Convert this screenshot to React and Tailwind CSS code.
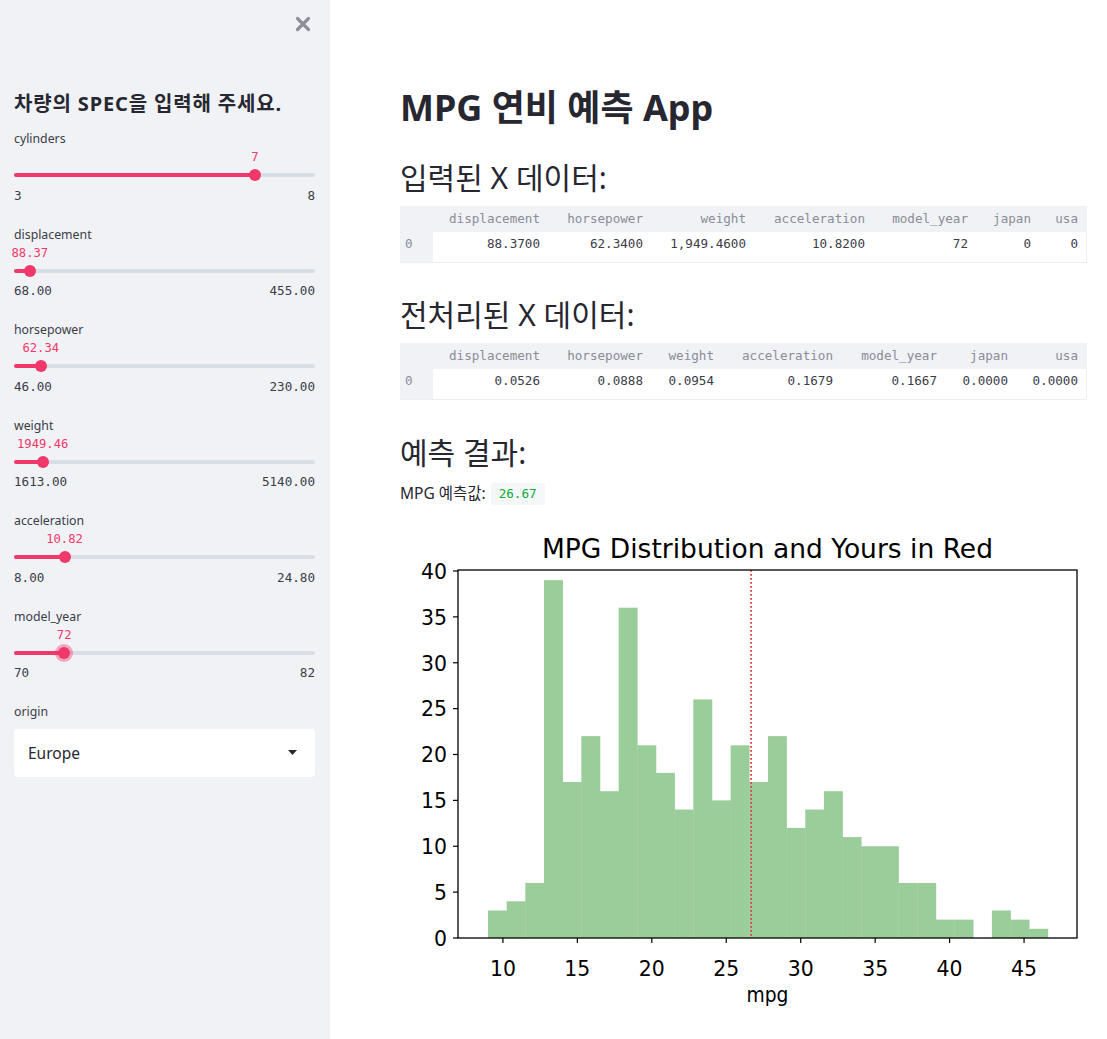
import React from "react";

const SANS = "font-['Noto_Sans','Noto_Sans_CJK_KR',sans-serif]";

const sliders = [
  { label: "cylinders", value: "7", min: "3", max: "8", frac: 0.8 },
  { label: "displacement", value: "88.37", min: "68.00", max: "455.00", frac: (88.37 - 68) / (455 - 68) },
  { label: "horsepower", value: "62.34", min: "46.00", max: "230.00", frac: (62.34 - 46) / 184 },
  { label: "weight", value: "1949.46", min: "1613.00", max: "5140.00", frac: (1949.46 - 1613) / 3527 },
  { label: "acceleration", value: "10.82", min: "8.00", max: "24.80", frac: (10.82 - 8) / 16.8 },
  { label: "model_year", value: "72", min: "70", max: "82", frac: 2 / 12, focus: true },
];

function Slider({ s }) {
  const pct = `${s.frac * 100}%`;
  return (
    <div className="mb-[17.5px]">
      <div className="h-[18px] text-[12.3px] leading-[18px] text-[#3b3d48]">{s.label}</div>
      <div className="relative h-[18px]">
        <span
          className="absolute top-0 -translate-x-1/2 font-['DejaVu_Sans_Mono',monospace] text-[12.2px] leading-[18px] text-[#f0386b] whitespace-nowrap"
          style={{ left: pct }}
        >
          {s.value}
        </span>
      </div>
      <div className="relative flex h-[18px] items-center">
        <div className="relative h-[4px] w-full rounded-full bg-[#d9dde6]">
          <div className="absolute left-0 top-0 h-[4px] rounded-full bg-[#f0386b]" style={{ width: pct }} />
        </div>
        <div
          className={
            "absolute top-1/2 h-[12px] w-[12px] -translate-x-1/2 -translate-y-1/2 rounded-full bg-[#f0386b] " +
            (s.focus ? "ring-[3px] ring-[#f0386b]/40" : "")
          }
          style={{ left: pct }}
        />
      </div>
      <div className="flex h-[24px] items-center justify-between font-['DejaVu_Sans_Mono',monospace] text-[12.6px] text-[#3b3d48]">
        <span>{s.min}</span>
        <span>{s.max}</span>
      </div>
    </div>
  );
}

function Sidebar() {
  return (
    <aside className="w-[330px] shrink-0 bg-[#f0f2f6] pl-[14px] pr-[15px]">
      <div className="flex h-[32px] items-end justify-end pr-[4px]">
        <svg width="16" height="16" viewBox="0 0 16 16">
          <path d="M2.5 2.5 L13.5 13.5 M13.5 2.5 L2.5 13.5" stroke="#8d8f98" strokeWidth="3.2" strokeLinecap="round" />
        </svg>
      </div>
      <h2 className="mt-[60px] h-[24px] whitespace-nowrap text-[20px] font-bold leading-[24px] tracking-[0.85px] text-[#262730]">
        차량의 SPEC을 입력해 주세요.
      </h2>
      <div className="mt-[14px]">
        {sliders.map((s) => (
          <Slider key={s.label} s={s} />
        ))}
      </div>
      <div className="-mt-[0.5px] h-[18px] text-[12.3px] leading-[18px] text-[#3b3d48]">origin</div>
      <div className="mt-[8px] flex h-[48px] items-center justify-between rounded-[4px] bg-white pl-[14px] pr-[18px]">
        <span className="pt-[2px] text-[15.5px] text-[#262730]">Europe</span>
        <svg width="9" height="5" viewBox="0 0 9 5">
          <path d="M0 0 L9 0 L4.5 5 Z" fill="#262730" />
        </svg>
      </div>
    </aside>
  );
}

function DataTable({ cols, headers, values }) {
  const tmpl = { gridTemplateColumns: cols.map((c) => c + "px").join(" ") };
  return (
    <div className="font-['DejaVu_Sans_Mono',monospace] text-[12.6px]">
      <div className="grid h-[26px] bg-[#f0f2f6] leading-[26px] text-[#8a8c96]" style={tmpl}>
        <div />
        {headers.map((h) => (
          <div key={h} className="pr-[8px] text-right">{h}</div>
        ))}
      </div>
      <div className="grid h-[31px] border-b border-r border-[#eceef3] leading-[24px] text-[#3b3d48]" style={tmpl}>
        <div className="bg-[#f0f2f6] pl-[5px] text-[#8a8c96]">0</div>
        {values.map((v, i) => (
          <div key={i} className="pr-[8px] text-right">{v}</div>
        ))}
      </div>
    </div>
  );
}

const counts = [3, 4, 6, 39, 17, 22, 16, 36, 21, 18, 14, 26, 15, 21, 17, 22, 12, 14, 16, 11, 10, 10, 6, 6, 2, 2, 0, 3, 2, 1];
const X = (v) => -46 + 14.89 * v;
const Y = (c) => 418 - c * 9.175;

function Chart() {
  const w = 37.6 / 30;
  return (
    <svg width="687" height="495" viewBox="0 0 687 495" className="block">
      <g fontFamily="'DejaVu Sans', sans-serif" fill="#000">
        <text x="367.5" y="37.5" fontSize="27" textAnchor="middle" textLength="451" lengthAdjust="spacingAndGlyphs">
          MPG Distribution and Yours in Red
        </text>
        {counts.map((c, i) => {
          if (!c) return null;
          const x0 = X(9 + i * w);
          const x1 = X(9 + (i + 1) * w);
          return <rect key={i} x={x0} y={Y(c)} width={x1 - x0 + 0.3} height={418 - Y(c)} fill="#9acd9a" />;
        })}
        <line x1={X(26.67)} x2={X(26.67)} y1="50" y2="418" stroke="#e03c3c" strokeWidth="1.8" strokeDasharray="1.8 2.2" />
        <rect x="58" y="50" width="619" height="368" fill="none" stroke="#000" strokeWidth="1.3" />
        {[0, 5, 10, 15, 20, 25, 30, 35, 40].map((t) => (
          <g key={t}>
            <line x1="53" x2="58" y1={Y(t)} y2={Y(t)} stroke="#000" strokeWidth="1.2" />
            <text
              x="47"
              y={Y(t) + 7.8}
              fontSize="21.5"
              textAnchor="end"
              textLength={t >= 10 ? 26 : 13}
              lengthAdjust="spacingAndGlyphs"
            >
              {t}
            </text>
          </g>
        ))}
        {[10, 15, 20, 25, 30, 35, 40, 45].map((t) => (
          <g key={t}>
            <line x1={X(t)} x2={X(t)} y1="418" y2="423" stroke="#000" strokeWidth="1.2" />
            <text x={X(t)} y="455.5" fontSize="21.5" textAnchor="middle" textLength="26" lengthAdjust="spacingAndGlyphs">
              {t}
            </text>
          </g>
        ))}
        <text x="367.5" y="482" fontSize="21.5" textAnchor="middle" textLength="42" lengthAdjust="spacingAndGlyphs">
          mpg
        </text>
      </g>
    </svg>
  );
}

export default function App() {
  return (
    <div className={"flex min-h-[1039px] w-full " + SANS}>
      <Sidebar />
      <main className="flex-1 bg-white pl-[70px] pr-[21px]">
        <h1 className="pt-[86px] text-[36px] font-bold leading-[44px] text-[#262730]">MPG 연비 예측 App</h1>
        <h2 className="mt-[30px] text-[30px] leading-[36px] text-[#262730]">입력된 X 데이터:</h2>
        <div className="mt-[10px]">
          <DataTable
            cols={[33, 115, 103, 103, 119, 103, 63, 47]}
            headers={["displacement", "horsepower", "weight", "acceleration", "model_year", "japan", "usa"]}
            values={["88.3700", "62.3400", "1,949.4600", "10.8200", "72", "0", "0"]}
          />
        </div>
        <h2 className="mt-[34px] text-[30px] leading-[36px] text-[#262730]">전처리된 X 데이터:</h2>
        <div className="mt-[10px]">
          <DataTable
            cols={[33, 115, 103, 71, 119, 104, 71, 70]}
            headers={["displacement", "horsepower", "weight", "acceleration", "model_year", "japan", "usa"]}
            values={["0.0526", "0.0888", "0.0954", "0.1679", "0.1667", "0.0000", "0.0000"]}
          />
        </div>
        <h2 className="mt-[35px] text-[30px] leading-[36px] text-[#262730]">예측 결과:</h2>
        <div className="mt-[12px] flex h-[22px] items-center text-[15.5px] text-[#262730]">
          <span>MPG 예측값:</span>
          <span className="ml-[5px] rounded-[3px] bg-[#f6f7f9] px-[8px] font-['DejaVu_Sans_Mono',monospace] text-[12.6px] leading-[22px] text-[#09ab3b]">
            26.67
          </span>
        </div>
        <div className="mt-[15px]">
          <Chart />
        </div>
      </main>
    </div>
  );
}
